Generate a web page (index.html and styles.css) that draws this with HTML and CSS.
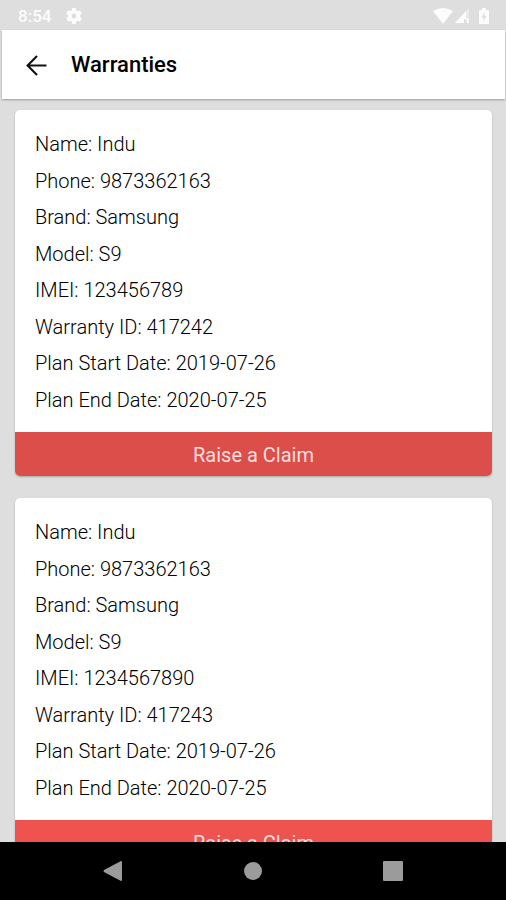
FILE: index.html
```html
<!DOCTYPE html>
<html lang="en">
<head>
<meta charset="utf-8">
<meta name="viewport" content="width=device-width, initial-scale=1">
<title>Warranties</title>
<link rel="stylesheet" href="styles.css">
</head>
<body>
<div class="status">
  <span class="time">8:54</span>
  <svg class="gear" viewBox="2 2 20 20" aria-hidden="true"><path d="M19.43 12.98c.04-.32.07-.64.07-.98s-.03-.66-.07-.98l2.11-1.65c.19-.15.24-.42.12-.64l-2-3.46c-.12-.22-.39-.3-.61-.22l-2.49 1c-.52-.4-1.08-.73-1.69-.98l-.38-2.65C14.46 2.18 14.25 2 14 2h-4c-.25 0-.46.18-.49.42l-.38 2.65c-.61.25-1.17.59-1.69.98l-2.49-1c-.23-.09-.49 0-.61.22l-2 3.46c-.13.22-.07.49.12.64l2.11 1.65c-.04.32-.07.65-.07.98s.03.66.07.98l-2.11 1.65c-.19.15-.24.42-.12.64l2 3.46c.12.22.39.3.61.22l2.49-1c.52.4 1.08.73 1.69.98l.38 2.65c.03.24.24.42.49.42h4c.25 0 .46-.18.49-.42l.38-2.65c.61-.25 1.17-.59 1.69-.98l2.49 1c.23.09.49 0 .61-.22l2-3.46c.12-.22.07-.49-.12-.64zM12 15A3 3 0 1 1 12 9a3 3 0 0 1 0 6z"/></svg>
  <svg class="wifi" viewBox="0 0 20 16" aria-hidden="true"><path d="M0 3Q10-3 20 3L10 16z"/></svg>
  <svg class="signal" viewBox="0 0 15 16" aria-hidden="true"><path d="M0 15 11 3V11H9V15z"/><path d="M11 3 14 0V9H11z" opacity=".4"/><path d="M11 10h3v2l-1 1h-2zM12 13h2v2h-2z"/></svg>
  <svg class="battery" viewBox="0 0 10 16" aria-hidden="true"><path fill-rule="evenodd" d="M3 0h4v2h2q1 0 1 1v12q0 1-1 1H1q-1 0-1-1V3q0-1 1-1h2zM5.500 4 2.500 9.500h2V13.500L7.500 8H5.500z"/></svg>
</div>
<header class="appbar">
  <button class="back" type="button" aria-label="Back"><svg viewBox="0 0 20 20" aria-hidden="true"><path d="M19.500 10H1.500M10.500 1 1.500 10l9 9"/></svg></button>
  <h1>Warranties</h1>
</header>
<main class="list">
  <article class="card">
    <div class="details">
      <p>Name: Indu</p>
      <p>Phone: 9873362163</p>
      <p>Brand: Samsung</p>
      <p>Model: S9</p>
      <p>IMEI: 123456789</p>
      <p>Warranty ID: 417242</p>
      <p>Plan Start Date: 2019-07-26</p>
      <p>Plan End Date: 2020-07-25</p>
    </div>
    <button class="claim pressed" type="button">Raise a Claim</button>
  </article>
  <article class="card">
    <div class="details">
      <p>Name: Indu</p>
      <p>Phone: 9873362163</p>
      <p>Brand: Samsung</p>
      <p>Model: S9</p>
      <p>IMEI: 1234567890</p>
      <p>Warranty ID: 417243</p>
      <p>Plan Start Date: 2019-07-26</p>
      <p>Plan End Date: 2020-07-25</p>
    </div>
    <button class="claim" type="button">Raise a Claim</button>
  </article>
</main>
<nav class="system">
  <button type="button" aria-label="Back"><svg viewBox="0 0 20 22" aria-hidden="true"><path d="M18 1q1 0 1 1v18q0 1-1 1L1 12q-1-1 0-2z"/></svg></button>
  <button type="button" aria-label="Home"><svg viewBox="0 0 20 22" aria-hidden="true"><circle cx="10" cy="11" r="9"/></svg></button>
  <button type="button" aria-label="Recent apps"><svg viewBox="0 0 20 22" aria-hidden="true"><rect y="1" width="20" height="20" rx="1"/></svg></button>
</nav>
</body>
</html>
```
FILE: styles.css
```css
* {
  box-sizing: border-box;
}

body {
  margin: 0;
  height: 100vh;
  display: flex;
  flex-direction: column;
  overflow: hidden;
  background: #dedede;
  color: #000;
  font-family: Roboto, "Liberation Sans", sans-serif;
  font-size: 20px;
  line-height: 24px;
}

button {
  border: 0;
  padding: 0;
  background: none;
  color: inherit;
  font: inherit;
}

svg {
  display: block;
}

.status {
  flex: none;
  display: flex;
  align-items: center;
  height: 30px;
  padding: 2px 17px 0 18px;
  color: #fcfcfc;
  fill: #fcfcfc;
  font-size: 17px;
  font-weight: 500;
}

.gear {
  width: 16px;
  height: 16px;
  margin-left: 15px;
}

.wifi {
  width: 20px;
  height: 16px;
  margin-left: auto;
}

.signal {
  width: 15px;
  height: 16px;
  margin-left: 2px;
}

.battery {
  width: 10px;
  height: 16px;
  margin-left: 9px;
}

.appbar {
  flex: none;
  display: flex;
  align-items: center;
  gap: 24px;
  height: 69px;
  margin: 0 1px 0 2px;
  padding: 1px 24px 0;
  background: #fff;
  box-shadow: 0 1px 2px rgba(0, 0, 0, 0.3);
}

.back svg {
  width: 21px;
  height: 21px;
  fill: none;
  stroke: #111;
  stroke-width: 2;
}

h1 {
  margin: 0;
  font-size: 22px;
  font-weight: 500;
}

.list {
  flex: 1;
  min-height: 0;
  display: flex;
  flex-direction: column;
  gap: 22px;
  padding: 11px 14px 0 15px;
  overflow: hidden;
}

.card {
  flex: none;
  border-radius: 5px;
  background: #fff;
  box-shadow: 0 1px 2px rgba(0, 0, 0, 0.25);
  overflow: hidden;
}

.details {
  display: flex;
  flex-direction: column;
  justify-content: space-between;
  min-height: 322px;
  padding: 22px 20px 20px;
  font-weight: 300;
}

.details p {
  margin: 0;
}

.claim {
  display: block;
  width: 100%;
  padding: 11px 10px 9px;
  background: #ef5350;
  color: #fbdedd;
}

.claim.pressed {
  background: #dc4e4a;
}

.system {
  flex: none;
  display: flex;
  justify-content: center;
  gap: 120px;
  height: 58px;
  background: #000;
}

.system svg {
  width: 20px;
  height: 22px;
  fill: #9b9b9b;
}
```
